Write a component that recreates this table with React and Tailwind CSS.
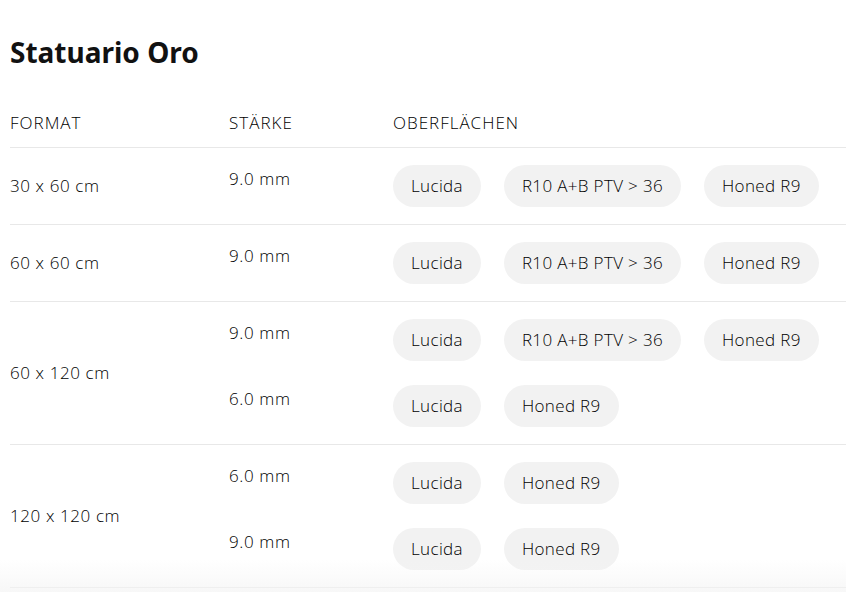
const rows = [
  { format: "30 x 60 cm", items: [{ mm: "9.0 mm", chips: ["Lucida", "R10 A+B PTV > 36", "Honed R9"] }] },
  { format: "60 x 60 cm", items: [{ mm: "9.0 mm", chips: ["Lucida", "R10 A+B PTV > 36", "Honed R9"] }] },
  {
    format: "60 x 120 cm",
    items: [
      { mm: "9.0 mm", chips: ["Lucida", "R10 A+B PTV > 36", "Honed R9"] },
      { mm: "6.0 mm", chips: ["Lucida", "Honed R9"] },
    ],
  },
  {
    format: "120 x 120 cm",
    items: [
      { mm: "6.0 mm", chips: ["Lucida", "Honed R9"] },
      { mm: "9.0 mm", chips: ["Lucida", "Honed R9"] },
    ],
  },
];

export default function App() {
  return (
    <main
      className="relative h-[592px] overflow-hidden bg-white pl-[10px] text-black"
      style={{ fontFamily: '"Open Sans", "Noto Sans", sans-serif' }}
    >
      <h1
        className="pt-[34px] text-[28px] font-bold leading-[36px] text-[#111]"
        style={{ fontFamily: '"Noto Sans", sans-serif' }}
      >
        Statuario Oro
      </h1>

      <div className="mt-[41px] flex border-b border-[#e8e8e8] pb-[12px] text-[17px] font-light leading-6 tracking-[1px]">
        <div className="w-[219px]">FORMAT</div>
        <div className="w-[164px]">STÄRKE</div>
        <div>OBERFLÄCHEN</div>
      </div>

      {rows.map((row) => (
        <div key={row.format} className="flex items-center border-b border-[#e8e8e8] py-[17px]">
          <div className="w-[219px] text-[17px] font-light leading-6 tracking-[0.6px]">{row.format}</div>
          <div className="flex flex-col gap-6">
            {row.items.map((item) => (
              <div key={item.mm} className="flex items-start">
                <div className="w-[164px] text-[17px] font-light leading-7 tracking-[0.6px]">{item.mm}</div>
                <div className="flex gap-[23px]">
                  {item.chips.map((c) => (
                    <span
                      key={c}
                      className="flex h-[42px] items-center rounded-full bg-[#f2f2f2] px-[18px] text-[17px] font-light tracking-[0.35px]"
                    >
                      {c}
                    </span>
                  ))}
                </div>
              </div>
            ))}
          </div>
        </div>
      ))}

      <div className="pointer-events-none absolute bottom-0 left-0 right-0 h-8 bg-gradient-to-b from-white/0 to-[#f4f4f4]/70" />
    </main>
  );
}
